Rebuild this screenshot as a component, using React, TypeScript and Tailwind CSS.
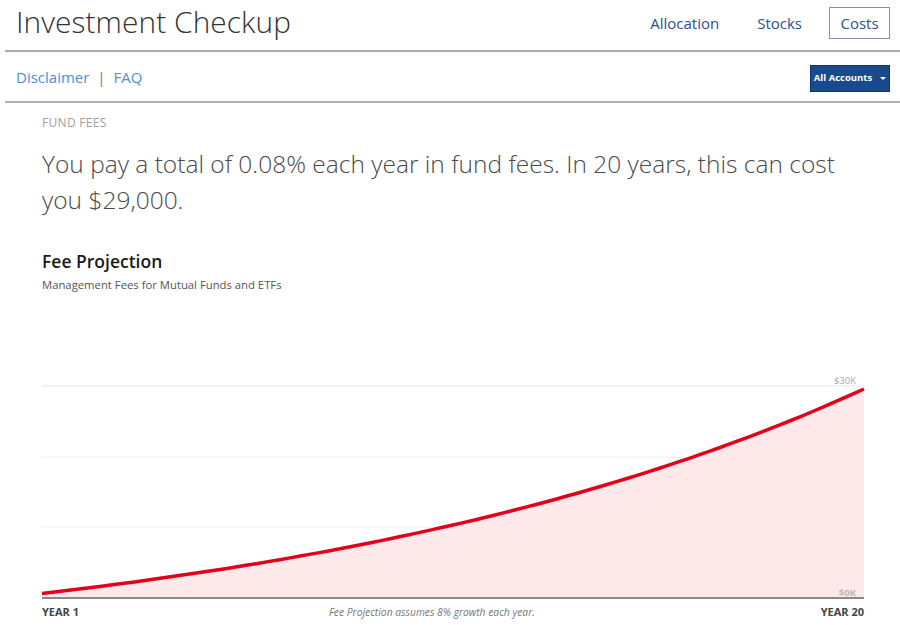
import React from "react";

const W = 822;
const H = 220;
const BASE = 217.5;

// fitted growth curve: height above baseline at t in [0,1]
function buildCurve() {
  const pts: string[] = [];
  for (let i = 0; i <= 80; i++) {
    const t = i / 80;
    const h = 5 + 69.56 * (Math.pow(3.94, t) - 1);
    const x = W * t;
    const y = BASE - h;
    pts.push(`${x.toFixed(1)},${y.toFixed(1)}`);
  }
  return pts;
}

function FeeChart() {
  const pts = buildCurve();
  const line = "M" + pts.join(" L");
  const area = line + ` L${W},${BASE} L0,${BASE} Z`;
  return (
    <svg width={W} height={H} className="block overflow-visible">
      <line x1={0} x2={W} y1={5} y2={5} stroke="#e6e6e6" strokeWidth={1} />
      <line x1={0} x2={W} y1={76} y2={76} stroke="#eeeeee" strokeWidth={1} />
      <line x1={0} x2={W} y1={146} y2={146} stroke="#eeeeee" strokeWidth={1} />
      <path d={area} fill="#fde8ea" />
      <path d={line} fill="none" stroke="#e2001a" strokeWidth={3.5} />
      <line x1={0} x2={W} y1={217} y2={217} stroke="#8a8a8a" strokeWidth={2} />
      <text x={W - 8} y={3} textAnchor="end" fontSize={9.5} fill="#a8a8a8" fontFamily="'Open Sans', sans-serif">
        $30K
      </text>
      <text x={W - 8} y={214.5} textAnchor="end" fontSize={9.5} fontWeight={700} fill="#b8b8b8" fontFamily="'Open Sans', sans-serif">
        $0K
      </text>
    </svg>
  );
}

export default function App() {
  return (
    <div className="w-[900px] h-[625px] bg-white overflow-hidden font-['Open_Sans',sans-serif] text-[#333]">
      <header className="flex items-center justify-between pl-4 pr-[10px] pb-[4px] h-[52px] ml-[5px] border-b-2 border-[#a9a9a9]">
        <h1 className="-ml-[5px] text-[29.8px] font-light text-[#333] leading-none tracking-[0.1px] pb-[3px]">
          Investment Checkup
        </h1>
        <nav className="flex items-center text-[15px] text-[#2d4f8e]">
          <a className="mr-[38px]">Allocation</a>
          <a className="mr-[27px]">Stocks</a>
          <a className="border border-[#7f8fae] h-[32px] w-[61px] flex items-center justify-center">
            Costs
          </a>
        </nav>
      </header>
      <div className="flex items-center justify-between ml-[5px] pl-[11px] pr-[10px] pt-[2px] h-[51px] border-b-2 border-[#b3b3b3]">
        <div className="flex items-center text-[15px] text-[#4a90d9]">
          <a>Disclaimer</a>
          <span className="mx-[8px] text-[#777]">|</span>
          <a>FAQ</a>
        </div>
        <button className="bg-[#194a8d] text-white text-[9.5px] font-bold h-[27px] w-[80px] flex items-center justify-center gap-[8px] border border-[#0f3570] mt-[2px]">
          All Accounts
          <span className="w-0 h-0 border-l-[3px] border-r-[3px] border-t-[3px] border-l-transparent border-r-transparent border-t-white" />
        </button>
      </div>
      <main className="pl-[42px] pr-[36px]">
        <div className="pt-[12px] text-[12px] text-[#a0a0a0] tracking-[0.3px] leading-[16px]">FUND FEES</div>
        <p className="mt-[15px] text-[24.5px] font-light text-[#4a4a4a] leading-[36px]">
          You pay a total of 0.08% each year in fund fees. In 20 years, this can cost you $29,000.
        </p>
        <h2 className="mt-[32px] text-[17.5px] font-semibold text-[#1a1a1a] leading-[22px]">Fee Projection</h2>
        <div className="mt-[5px] text-[11.3px] text-[#555] leading-[16px]">Management Fees for Mutual Funds and ETFs</div>
        <div className="mt-[88px]">
          <FeeChart />
        </div>
        <div className="flex items-center justify-between w-[822px] mt-[3px] text-[11px] font-bold text-[#444]">
          <span>YEAR 1</span>
          <span className="text-[10.3px] italic font-normal text-[#777] mr-[36px]">
            Fee Projection assumes 8% growth each year.
          </span>
          <span>YEAR 20</span>
        </div>
      </main>
    </div>
  );
}
